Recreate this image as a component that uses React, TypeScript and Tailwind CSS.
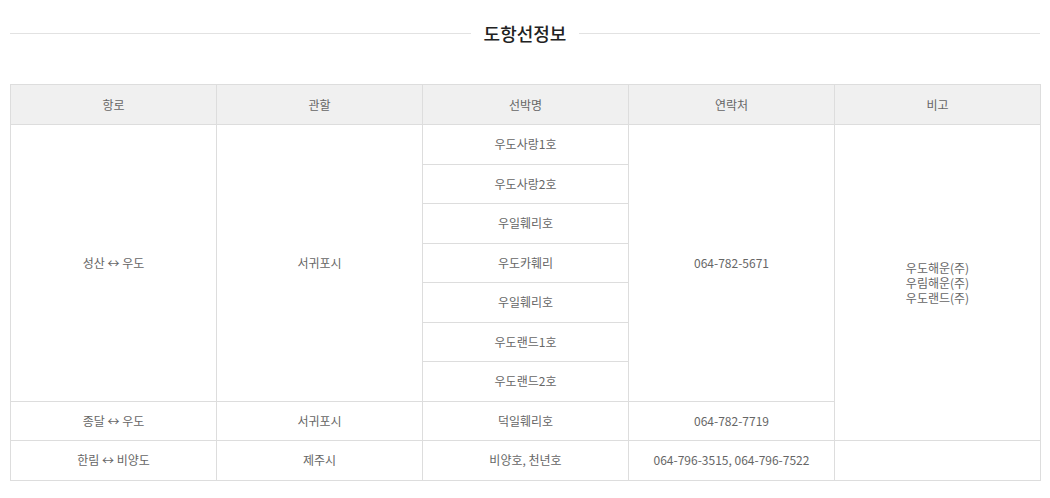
import React from "react"

const cell = "border border-[#dddddd] text-center align-middle text-[12px] text-[#666] font-normal"

export default function App() {
  return (
    <div className="w-[1050px] bg-white pt-[20px] pb-[18px] font-['Noto_Sans_CJK_KR','Noto_Sans',sans-serif]">
      <div className="flex items-center gap-[13px] px-[10px]">
        <div className="h-px flex-1 bg-[#e2e2e2]" />
        <h2 className="text-[18px] font-medium leading-[26px] text-[#222]">도항선정보</h2>
        <div className="h-px flex-1 bg-[#e2e2e2]" />
      </div>
      <div className="mx-[10px] mt-[38px]">
        <table className="w-[1031px] table-fixed border-collapse">
          <thead>
            <tr className="h-[40px] bg-[#f0f0f0]">
              <th className={cell}>항로</th>
              <th className={cell}>관할</th>
              <th className={cell}>선박명</th>
              <th className={cell}>연락처</th>
              <th className={cell}>비고</th>
            </tr>
          </thead>
          <tbody>
            <tr className="h-[39.5px]">
              <td className={cell} rowSpan={7}>성산 ↔ 우도</td>
              <td className={cell} rowSpan={7}>서귀포시</td>
              <td className={cell}>우도사랑1호</td>
              <td className={cell} rowSpan={7}>064-782-5671</td>
              <td className={`${cell} leading-[15px]`} rowSpan={8}>
                우도해운(주)<br />우림해운(주)<br />우도랜드(주)
              </td>
            </tr>
            {["우도사랑2호", "우일훼리호", "우도카훼리", "우일훼리호", "우도랜드1호", "우도랜드2호"].map((name, i) => (
              <tr key={i} className="h-[39.5px]">
                <td className={cell}>{name}</td>
              </tr>
            ))}
            <tr className="h-[39.5px]">
              <td className={cell}>종달 ↔ 우도</td>
              <td className={cell}>서귀포시</td>
              <td className={cell}>덕일훼리호</td>
              <td className={cell}>064-782-7719</td>
            </tr>
            <tr className="h-[39.5px]">
              <td className={cell}>한림 ↔ 비양도</td>
              <td className={cell}>제주시</td>
              <td className={cell}>비양호, 천년호</td>
              <td className={cell}>064-796-3515, 064-796-7522</td>
              <td className={cell}></td>
            </tr>
          </tbody>
        </table>
      </div>
    </div>
  )
}
